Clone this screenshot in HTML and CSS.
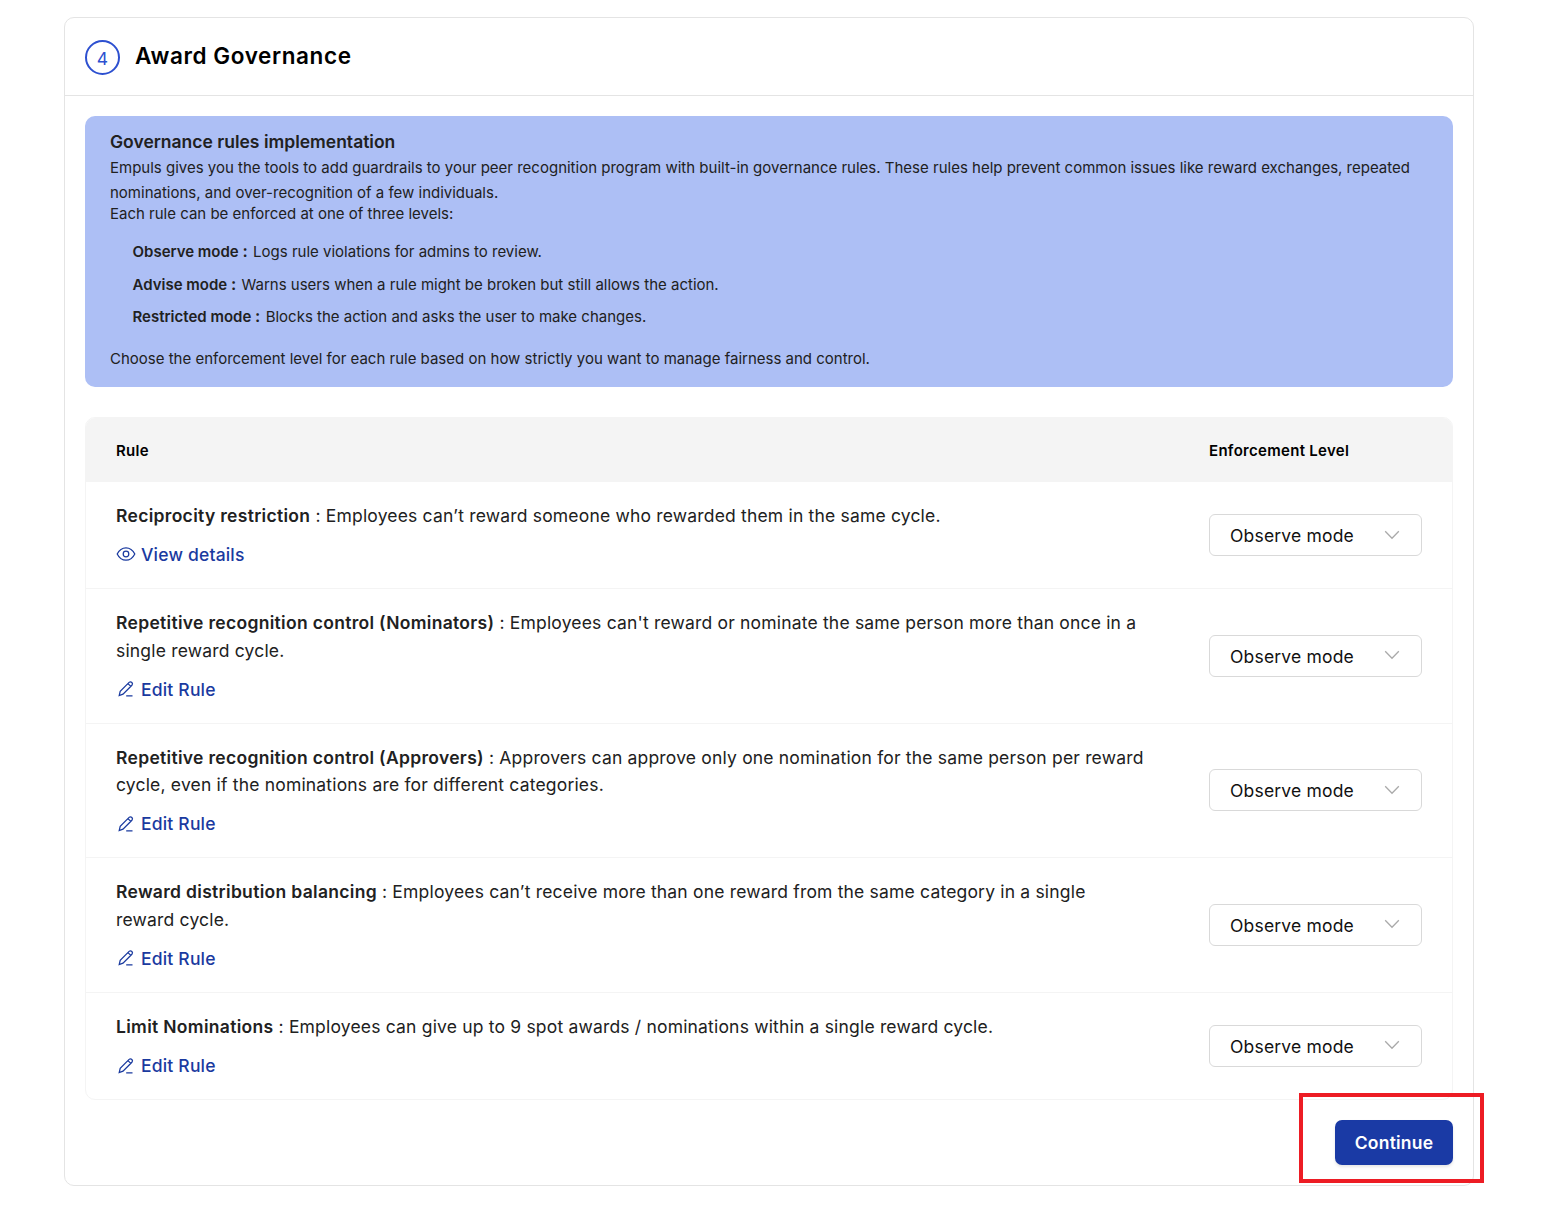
FILE: index.html
```
<!DOCTYPE html>
<html lang="en">
<head>
<meta charset="utf-8">
<title>Award Governance</title>
<link rel="stylesheet" href="styles.css">
</head>
<body>
<svg class="sprite" aria-hidden="true">
  <symbol id="eye" viewBox="0 0 20 20"><path d="M1.2 10C3.2 6 6.3 3.8 10 3.8S16.800 6 18.800 10C16.800 14 13.700 16.200 10 16.200S3.200 14 1.200 10Z"/><circle cx="10" cy="10" r="2.800"/></symbol>
  <symbol id="pen" viewBox="0 0 18 18"><path d="M2.200 15.600L3.200 11.300L12.100 2.400Q13.500 1.200 14.900 2.500Q16.100 3.900 14.900 5.300L6 14.200ZM11 3.600L13.800 6.400M9.200 15.900H15.500"/></symbol>
  <symbol id="chevron" viewBox="0 0 16 10"><path d="M1.200 1.200L8 8.200L14.800 1.200"/></symbol>
</svg>
<main class="card">
  <header class="card-header">
    <span class="step">4</span>
    <h1 class="title">Award Governance</h1>
  </header>
  <section class="info">
    <h2 class="info-title">Governance rules implementation</h2>
    <p class="info-lead">Empuls gives you the tools to add guardrails to your peer recognition program with built-in governance rules. These rules help prevent common issues like reward exchanges, repeated nominations, and over-recognition of a few individuals.</p>
    <p class="info-line">Each rule can be enforced at one of three levels:</p>
    <ul class="modes">
      <li><b>Observe mode <i>:</i></b> Logs rule violations for admins to review.</li>
      <li><b>Advise mode <i>:</i></b> Warns users when a rule might be broken but still allows the action.</li>
      <li><b>Restricted mode <i>:</i></b> Blocks the action and asks the user to make changes.</li>
    </ul>
    <p class="info-line">Choose the enforcement level for each rule based on how strictly you want to manage fairness and control.</p>
  </section>
  <section class="rules">
    <div class="row head"><span>Rule</span><span>Enforcement Level</span></div>
    <div class="row">
      <div class="rule">
        <p><b>Reciprocity restriction</b> : Employees can’t reward someone who rewarded them in the same cycle.</p>
        <a class="link"><svg class="icon icon-eye"><use href="#eye"/></svg>View details</a>
      </div>
      <div class="select">Observe mode<svg class="chevron"><use href="#chevron"/></svg></div>
    </div>
    <div class="row tall">
      <div class="rule">
        <p><b>Repetitive recognition control (Nominators)</b> : Employees can't reward or nominate the same person more than once in a single reward cycle.</p>
        <a class="link"><svg class="icon"><use href="#pen"/></svg>Edit Rule</a>
      </div>
      <div class="select">Observe mode<svg class="chevron"><use href="#chevron"/></svg></div>
    </div>
    <div class="row tall">
      <div class="rule">
        <p><b>Repetitive recognition control (Approvers)</b> : Approvers can approve only one nomination for the same person per reward cycle, even if the nominations are for different categories.</p>
        <a class="link"><svg class="icon"><use href="#pen"/></svg>Edit Rule</a>
      </div>
      <div class="select">Observe mode<svg class="chevron"><use href="#chevron"/></svg></div>
    </div>
    <div class="row tall">
      <div class="rule">
        <p><b>Reward distribution balancing</b> : Employees can’t receive more than one reward from the same category in a single reward cycle.</p>
        <a class="link"><svg class="icon"><use href="#pen"/></svg>Edit Rule</a>
      </div>
      <div class="select">Observe mode<svg class="chevron"><use href="#chevron"/></svg></div>
    </div>
    <div class="row">
      <div class="rule">
        <p><b>Limit Nominations</b> : Employees can give up to 9 spot awards / nominations within a single reward cycle.</p>
        <a class="link"><svg class="icon"><use href="#pen"/></svg>Edit Rule</a>
      </div>
      <div class="select">Observe mode<svg class="chevron"><use href="#chevron"/></svg></div>
    </div>
  </section>
  <footer class="actions">
    <div class="action"><button class="continue">Continue</button><span class="highlight"></span></div>
  </footer>
</main>
</body>
</html>
```
FILE: styles.css
```
* { box-sizing: border-box; }
body {
  margin: 0;
  padding: 17px 84px 0 64px;
  background: #fff;
  color: #212121;
  font-family: Inter, "Liberation Sans", sans-serif;
  font-size: 17.5px;
  letter-spacing: 0.183px;
}
h1, h2, p, ul { margin: 0; }
b { font-weight: 600; }
.sprite { display: none; }
svg { fill: none; stroke: currentColor; }

.card { height: 1169px; border: 1px solid #e4e4e4; border-radius: 10px; }
.card-header {
  display: flex;
  align-items: center;
  gap: 15px;
  height: 78px;
  padding: 1px 20px 0;
  border-bottom: 1px solid #e4e4e4;
}
.step {
  width: 35px;
  height: 35px;
  border: 2px solid #2d50d0;
  border-radius: 50%;
  color: #2d50d0;
  line-height: 33px;
  text-align: center;
}
.title { color: #000; font-size: 22.5px; font-weight: 600; line-height: 30px; letter-spacing: 0.6px; padding-bottom: 3px; }

.info {
  height: 271px;
  margin: 20px 20px 30px;
  padding: 13px 25px 0;
  border-radius: 10px;
  background: #adbff5;
  font-size: 15px;
  letter-spacing: 0;
}
.info-title { font-size: 17.5px; font-weight: 600; line-height: 26px; }
.info-lead { line-height: 25px; }
.info-line { line-height: 18px; }
.modes { list-style: none; padding: 13px 0 16px 22.5px; line-height: 32.5px; }
.modes b { margin-right: 1.1px; }
.modes i { font-style: normal; font-size: 16.5px; line-height: 1; }

.rules { margin: 0 20px; border: 1px solid #f4f4f4; border-radius: 10px; overflow: hidden; }
.row {
  display: grid;
  grid-template-columns: 1093px 213px;
  align-items: center;
  height: 107px;
  padding: 0 30px;
  border-bottom: 1px solid #f4f4f4;
}
.row.tall { height: 134.6px; }
.row:last-child { height: 106px; border-bottom: 0; }
.row.head { height: 64px; padding-top: 2px; background: #f4f4f4; color: #000; font-size: 15px; font-weight: 600; letter-spacing: 0.3px; }
.rule { padding: 0.5px 64px 0 0; line-height: 27.5px; }
.rule b { letter-spacing: 0.31px; }
.link { display: flex; align-items: center; gap: 5px; margin-top: 11.5px; color: #1a3a9f; font-weight: 500; letter-spacing: 0.19px; }
.icon { width: 18px; height: 18px; margin: 0 1px; stroke-width: 1.25; }
.icon-eye { width: 20px; height: 20px; margin: -2px 0 0; }
.select {
  display: flex;
  align-items: center;
  justify-content: space-between;
  height: 42px;
  padding: 1px 21px 0 20px;
  border: 1px solid #d9d9d9;
  border-radius: 6px;
  color: #111;
}
.chevron { width: 16px; height: 10px; margin-top: -2px; color: #aaa; stroke-width: 1.3; }

.actions { display: flex; justify-content: flex-end; padding: 20px 20px 0; }
.action { position: relative; }
.continue {
  display: block;
  width: 118px;
  height: 45px;
  padding: 0;
  border: 0;
  border-radius: 7px;
  background: #1a3aa5;
  box-shadow: 0 2px 3px rgba(0, 0, 0, 0.1);
  color: #fff;
  font: 600 17.5px Inter, "Liberation Sans", sans-serif;
  letter-spacing: 0.22px;
}
.highlight { position: absolute; left: -36px; top: -27px; width: 185px; height: 90px; border: 4px solid #ed1c24; pointer-events: none; }
```
